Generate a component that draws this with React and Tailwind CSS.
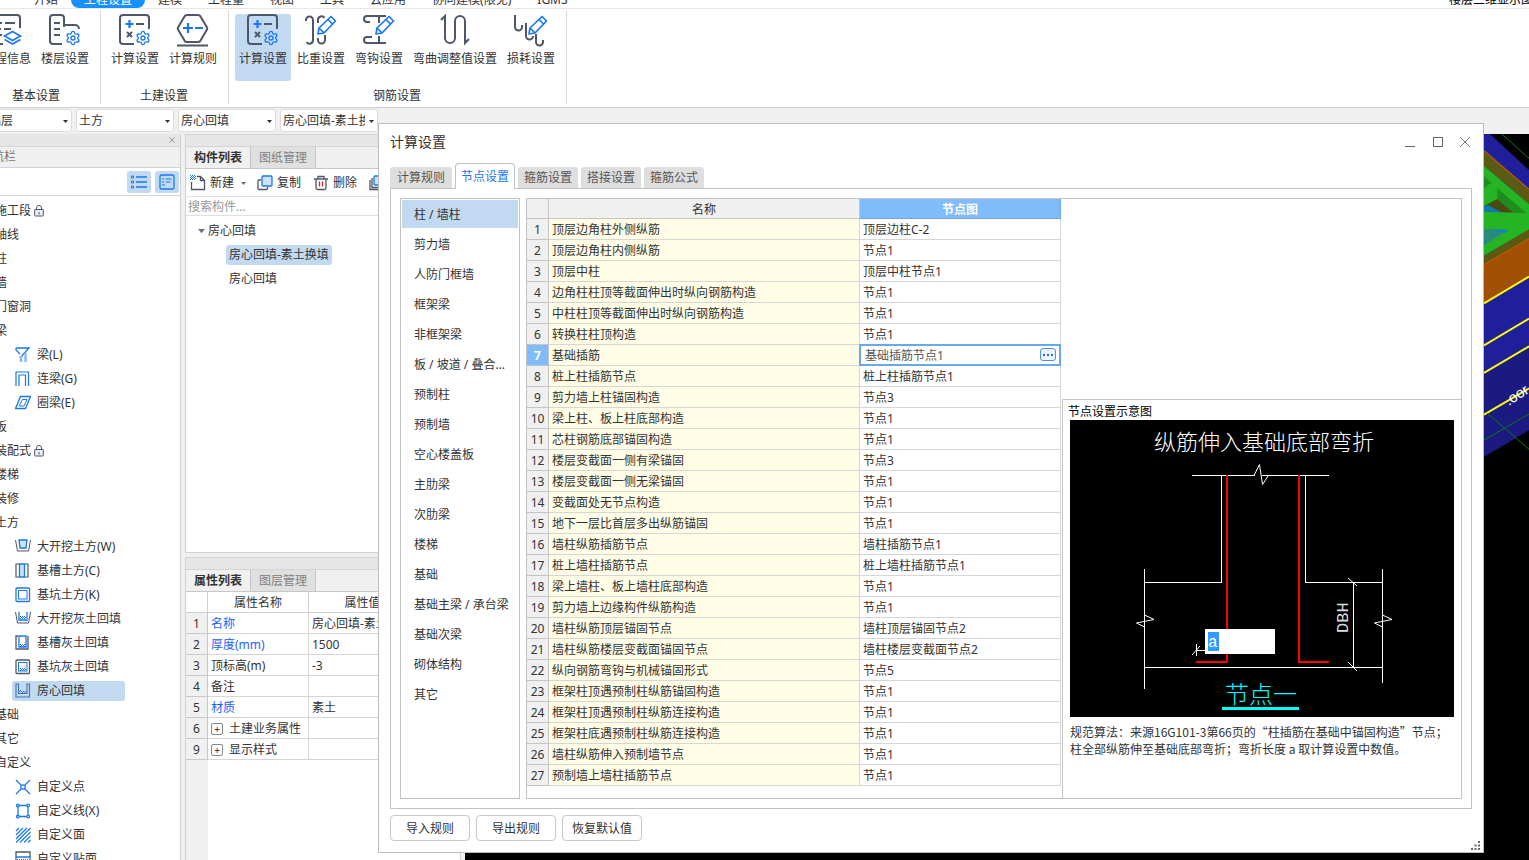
import { useState } from 'react';
import { Settings, X } from 'lucide-react';

const DARK = '#4d5769';
const BLUE = '#1a78ec';

const MENU = ['开始', '工程设置', '建模', '工程量', '视图', '工具', '云应用', '协同建模(限免)', 'IGMS'];

const RIBBON = [
  {
    title: '基本设置',
    items: [
      { label: '工程信息', icon: 'info' },
      { label: '楼层设置', icon: 'floor' },
    ],
  },
  {
    title: '土建设置',
    items: [
      { label: '计算设置', icon: 'calc' },
      { label: '计算规则', icon: 'rule' },
    ],
  },
  {
    title: '钢筋设置',
    items: [
      { label: '计算设置', icon: 'calc', active: true },
      { label: '比重设置', icon: 'weight' },
      { label: '弯钩设置', icon: 'hook' },
      { label: '弯曲调整值设置', icon: 'bend', wide: true },
      { label: '损耗设置', icon: 'loss' },
    ],
  },
];

const FILTERS = [
  { label: '楼层', value: '基础层' },
  { label: '构件大类', value: '土方' },
  { label: '构件类型', value: '房心回填' },
  { label: '构件', value: '房心回填-素土换填' },
];

const NAV = [
  { label: '施工段', lock: true },
  { label: '轴线' },
  { label: '柱' },
  { label: '墙' },
  { label: '门窗洞' },
  { label: '梁' },
  { label: '梁(L)', icon: 'beam' },
  { label: '连梁(G)', icon: 'link' },
  { label: '圈梁(E)', icon: 'ring' },
  { label: '板' },
  { label: '装配式', lock: true },
  { label: '楼梯' },
  { label: '装修' },
  { label: '土方' },
  { label: '大开挖土方(W)', icon: 'dig' },
  { label: '基槽土方(C)', icon: 'trench' },
  { label: '基坑土方(K)', icon: 'pit' },
  { label: '大开挖灰土回填', icon: 'digFill' },
  { label: '基槽灰土回填', icon: 'trenchFill' },
  { label: '基坑灰土回填', icon: 'pitFill' },
  { label: '房心回填', icon: 'room', active: true },
  { label: '基础' },
  { label: '其它' },
  { label: '自定义' },
  { label: '自定义点', icon: 'point' },
  { label: '自定义线(X)', icon: 'line' },
  { label: '自定义面', icon: 'face' },
  { label: '自定义贴面', icon: 'veneer' },
];

const PROPS = [
  { no: 1, name: '名称', value: '房心回填-素土换填', blue: true },
  { no: 2, name: '厚度(mm)', value: '1500', blue: true },
  { no: 3, name: '顶标高(m)', value: '-3' },
  { no: 4, name: '备注', value: '' },
  { no: 5, name: '材质', value: '素土', blue: true },
  { no: 6, name: '土建业务属性', value: '', group: true },
  { no: 9, name: '显示样式', value: '', group: true },
];

const DIALOG_TABS = ['计算规则', '节点设置', '箍筋设置', '搭接设置', '箍筋公式'];

const CATEGORIES = [
  '柱 / 墙柱', '剪力墙', '人防门框墙', '框架梁', '非框架梁', '板 / 坡道 / 叠合板(整厚)', '预制柱', '预制墙',
  '空心楼盖板', '主肋梁', '次肋梁', '楼梯', '基础', '基础主梁 / 承台梁', '基础次梁', '砌体结构', '其它',
];

const NODES = [
  ['顶层边角柱外侧纵筋', '顶层边柱C-2'],
  ['顶层边角柱内侧纵筋', '节点1'],
  ['顶层中柱', '顶层中柱节点1'],
  ['边角柱柱顶等截面伸出时纵向钢筋构造', '节点1'],
  ['中柱柱顶等截面伸出时纵向钢筋构造', '节点1'],
  ['转换柱柱顶构造', '节点1'],
  ['基础插筋', '基础插筋节点1'],
  ['桩上柱插筋节点', '桩上柱插筋节点1'],
  ['剪力墙上柱锚固构造', '节点3'],
  ['梁上柱、板上柱底部构造', '节点1'],
  ['芯柱钢筋底部锚固构造', '节点1'],
  ['楼层变截面一侧有梁锚固', '节点3'],
  ['楼层变截面一侧无梁锚固', '节点1'],
  ['变截面处无节点构造', '节点1'],
  ['地下一层比首层多出纵筋锚固', '节点1'],
  ['墙柱纵筋插筋节点', '墙柱插筋节点1'],
  ['桩上墙柱插筋节点', '桩上墙柱插筋节点1'],
  ['梁上墙柱、板上墙柱底部构造', '节点1'],
  ['剪力墙上边缘构件纵筋构造', '节点1'],
  ['墙柱纵筋顶层锚固节点', '墙柱顶层锚固节点2'],
  ['墙柱纵筋楼层变截面锚固节点', '墙柱楼层变截面节点2'],
  ['纵向钢筋弯钩与机械锚固形式', '节点5'],
  ['框架柱顶遇预制柱纵筋锚固构造', '节点1'],
  ['框架柱顶遇预制柱纵筋连接构造', '节点1'],
  ['框架柱底遇预制柱纵筋连接构造', '节点1'],
  ['墙柱纵筋伸入预制墙节点', '节点1'],
  ['预制墙上墙柱插筋节点', '节点1'],
];

function Gear() {
  return <Settings x="17" y="16" width="16" height="16" color={BLUE} strokeWidth={2} />;
}

function Pencil({ x = 0 }) {
  return (
    <g transform={`translate(${x} 0)`} stroke={BLUE} strokeWidth="1.7" strokeLinejoin="round">
      <path d="M14 20l1-6L27 2.500l4.500 4.500L20 19z" />
      <path d="M24 5.500l4.500 4.500M15 14l5 5" />
    </g>
  );
}

const RIBBON_ICONS = {
  info: (
    <>
      <path d="M13 30H6a3 3 0 0 1-3-3V4a3 3 0 0 1 3-3h21a3 3 0 0 1 3 3v10M8 9h4M15 9h10M8 15h3M14 15h7M8 21h4" />
      <g stroke={BLUE} strokeWidth="1.600">
        <path d="M22.500 17.500l8 4.500-8 4.500-8-4.500zM14.500 25.500l8 4.500 8-4.500" />
      </g>
    </>
  ),
  floor: (
    <>
      <path d="M14 30H5a3 3 0 0 1-3-3V4a3 3 0 0 1 3-3h8a3 3 0 0 1 3 3v9M16 11h11a4 4 0 0 1 4 4M6 9h6M6 15h6M6 21h6" />
      <Gear />
    </>
  ),
  calc: (
    <>
      <path d="M16 30H5a3 3 0 0 1-3-3V4a3 3 0 0 1 3-3h23a3 3 0 0 1 3 3v11M18 10h8M9 18l5 5M14 18l-5 5" />
      <path d="M7.500 10h8M11.500 6v8" stroke={BLUE} strokeWidth="2.200" />
      <Gear />
    </>
  ),
  rule: (
    <>
      <path d="M11 1h11a3 3 0 0 1 2.500 1.400L31 13.500a2 2 0 0 1 0 2L24.500 26.600A3 3 0 0 1 22 28H11a3 3 0 0 1-2.500-1.400L2 15.500a2 2 0 0 1 0-2L8.500 2.400A3 3 0 0 1 11 1zM1 31.500h31" />
      <path d="M7 14h10M12 9v10M19 14h8" stroke={BLUE} strokeWidth="2.200" />
    </>
  ),
  weight: (
    <>
      <path d="M2 7V6a3.500 3.500 0 0 1 7 0v20a3.500 3.500 0 0 1-6.500 2M14 9V6a3.500 3.500 0 0 1 6.500-2M14 24v2a3.500 3.500 0 0 0 7 0v-5" />
      <Pencil />
    </>
  ),
  hook: (
    <>
      <path d="M8 8H5a3 3 0 0 1 0-6h19M17 2v7M5 29h19M5 29a3 3 0 0 1 0-6h5M17 22v7" />
      <Pencil />
    </>
  ),
  bend: (
    <path d="M3 6l4-4v22a5 5 0 0 0 10 0V7a5 5 0 0 1 10 0v22l4-4" />
  ),
  loss: (
    <>
      <path d="M1 1v12a3 3 0 0 0 7 0v-2M12 9v13a3 3 0 0 0 7 0M22 20v8a3 3 0 0 0 7 0v-2" />
      <Pencil x={1} />
    </>
  ),
};

const HATCH = 'M5 9.500h1M7 9.500h1M9 9.500h1M6 10.500h1M8 10.500h1M5 11.500h1M7 11.500h1M9 11.500h1M10 10.500h1';

const TREE_ICONS = {
  beam: (
    <>
      <path d="M1 1h13L5 11M1 1v2l4 4" />
      <path d="M6 9v6M10.500 6v9" stroke="#8ab9f5" strokeWidth="2.500" />
    </>
  ),
  link: <path d="M1 15V1h12.500v14M4 15V4h6.500v11" strokeWidth="1.200" />,
  ring: (
    <>
      <path d="M5.500 1.500H15.500l-5 12H.500z" />
      <path d="M7.500 4.500h4.500l-3 6.500H4z" strokeWidth="1" />
    </>
  ),
  dig: (
    <>
      <path d="M4 1h8l-1 8H5z" fill="#cfe2fb" />
      <path d="M.500 1l2 11h11l2-11" stroke={DARK} strokeWidth="1" />
    </>
  ),
  trench: (
    <>
      <path d="M4.500 1h5v13h-5z" fill="#cfe2fb" />
      <path d="M4 1H1v13h3M10 1h3v13h-3" stroke={DARK} strokeWidth="1.200" />
    </>
  ),
  pit: (
    <>
      <rect x="1" y="1" width="13.500" height="13.500" rx="1" />
      <rect x="3.500" y="3.500" width="8.500" height="8.500" strokeWidth="1" />
    </>
  ),
  digFill: (
    <>
      <path d="M4 1v8h8V1" />
      <path d="M.500 1l2 11h11l2-11" stroke={DARK} strokeWidth="1" />
      <path d="M5 5.500h1M7 5.500h1M9 5.500h1M6 6.500h1M8 6.500h1M10 6.500h1M5 7.500h1M7 7.500h1M9 7.500h1" strokeWidth="1" />
    </>
  ),
  trenchFill: (
    <>
      <path d="M4 1h7v11H4z" />
      <path d="M3 1H1v13h12V1" stroke={DARK} />
      <path d={HATCH} strokeWidth="1" />
    </>
  ),
  pitFill: (
    <>
      <rect x="1" y="1" width="13.500" height="13.500" rx="1" stroke={DARK} />
      <rect x="3.500" y="3.500" width="8.500" height="8.500" strokeWidth="1" />
      <path d={HATCH} strokeWidth="1" />
    </>
  ),
  room: (
    <>
      <path d="M3.500 1H1v13h13.500V1H12v9.500H3.500z" stroke="#4373ae" strokeWidth="1.100" />
      <path d="M4 8.500h1M6 8.500h1M8 8.500h1M10 8.500h1M5 7.500h1M7 9.500h1M9 9.500h1" strokeWidth="1" />
    </>
  ),
  point: (
    <>
      <path d="M1 1l5 5M15 1l-5 5M1 15l5-5M15 15l-5-5" />
      <circle cx="8" cy="8" r="2.200" />
    </>
  ),
  line: (
    <>
      <path d="M3 4v8M13 4v8M4 2.500h8M4 13.500h8" />
      <circle cx="2.800" cy="2.500" r="1.300" />
      <circle cx="13.200" cy="2.500" r="1.300" />
      <circle cx="2.800" cy="13.500" r="1.300" />
      <circle cx="13.200" cy="13.500" r="1.300" />
    </>
  ),
  face: <path d="M1 4l3-3M1 8l7-7M1 12l11-11M1 15.500L15.500 1M5 15.500L15.500 5M9 15.500l6.500-6.500M13 15.500l2.500-2.500" strokeWidth="1.200" />,
  veneer: (
    <>
      <path d="M1 6V1h14v5" stroke={DARK} />
      <path d="M1 6h14v8H1z" />
      <path d="M2 8.500h1M4 8.500h1M6 8.500h1M8 8.500h1M10 8.500h1M12 8.500h1M3 9.500h1M5 9.500h1M7 9.500h1M9 9.500h1M11 9.500h1" strokeWidth="1" />
    </>
  ),
};

function Caret({ className = 'w-[5px]' }) {
  return (
    <svg viewBox="0 0 5 3" className={`shrink-0 ${className}`}>
      <path d="M0 0h5L2.500 3z" fill="currentColor" />
    </svg>
  );
}

function Lock() {
  return (
    <svg viewBox="0 0 10 12" className="ml-[3px] h-3 w-[10px]" fill="none" stroke={DARK}>
      <rect x=".7" y="4.500" width="8.600" height="6.500" rx=".5" fill="#eaf1fb" />
      <path d="M2.500 4.500V3a2.500 2.500 0 0 1 5 0v1.500M5 7v2.500" />
    </svg>
  );
}

function MenuBar() {
  return (
    <nav className="flex h-[9px] shrink-0 items-end overflow-hidden border-b border-[#e8e8e8] bg-white pl-[21px]">
      {MENU.map((item) => (
        <a
          key={item}
          href="#"
          className={`h-[18px] shrink-0 px-[13px] leading-5 ${
            item === '工程设置' ? 'rounded-lg bg-[#1890ff] text-white' : ''
          }`}
        >
          {item}
        </a>
      ))}
      <a href="#" className="ml-auto h-[18px] w-20 shrink-0 leading-5 whitespace-nowrap text-black">
        楼层三维显示图
      </a>
    </nav>
  );
}

function Ribbon() {
  return (
    <div className="flex h-[99px] shrink-0 border-b border-[#d0d0d0] bg-white pt-[2px] pb-[3px]">
      {RIBBON.map((group, i) => (
        <section
          key={group.title}
          className={`flex shrink-0 flex-col items-center justify-between border-r border-[#d9d9d9] pt-[3px] pr-[7px] pl-[6px] ${
            i === 0 ? '-ml-[27px]' : ''
          }`}
        >
          <div className="flex gap-[2px]">
            {group.items.map((item) => (
              <button
                key={item.label}
                type="button"
                className={`flex h-[67px] flex-col items-center rounded-[3px] whitespace-nowrap ${
                  item.wide ? 'w-[92px]' : 'w-14'
                } ${item.active ? 'bg-[#c2d9f2]' : ''}`}
              >
                <svg viewBox="0 0 34 34" className="h-[34px] w-[34px]" fill="none" stroke={DARK} strokeWidth="2">
                  {RIBBON_ICONS[item.icon]}
                </svg>
                <span className="mt-[3px] leading-4">{item.label}</span>
              </button>
            ))}
          </div>
          <h2 className="leading-4">{group.title}</h2>
        </section>
      ))}
    </div>
  );
}

function FilterBar() {
  return (
    <div className="flex h-[26px] shrink-0 gap-1 bg-[#f0f0f0] pt-[1px]">
      {FILTERS.map((f, i) => (
        <label
          key={f.label}
          className={`flex h-[23px] w-[98px] shrink-0 items-center gap-1 rounded-[3px] border border-[#dcdcdc] bg-white pt-px ${
            i === 0 ? '-ml-[26px]' : ''
          }`}
        >
          <select
            aria-label={f.label}
            className="w-[84px] shrink-0 appearance-none overflow-hidden bg-transparent pl-[2px] leading-5 text-clip outline-none"
          >
            <option>{f.value}</option>
          </select>
          <Caret />
        </label>
      ))}
    </div>
  );
}

function NavPanel() {
  return (
    <aside className="flex w-[181px] shrink-0 flex-col overflow-hidden border-r border-[#d0d0d0] bg-white">
      <div className="flex h-[13px] shrink-0 items-center justify-end border-b border-[#d4d4d4] bg-[#e6e6e6] pr-[3px]">
        <button type="button" aria-label="关闭">
          <X size={10} color="#8a8a8a" />
        </button>
      </div>
      <h2 className="h-[21px] shrink-0 border-b border-[#d4d4d4] bg-[#f0f0f0] leading-5 text-[#777]">
        <span className="-ml-[20px]">导航栏</span>
      </h2>
      <div className="flex h-7 shrink-0 items-center justify-end gap-1 border-b border-[#d4d4d4] pr-[1px]">
        <button type="button" aria-label="列表" className="rounded-[3px] bg-[#c2d9f2] p-1 py-[3px]">
          <svg viewBox="0 0 16 16" className="size-4" fill="none" stroke={BLUE}>
            <path d="M5 3h11M5 8h11M5 13h11" strokeWidth="1.300" />
            <path d="M.500 2h2v2h-2zM.500 7h2v2h-2zM.500 12h2v2h-2z" />
          </svg>
        </button>
        <button type="button" aria-label="详情" className="rounded-[3px] bg-[#c2d9f2] p-1 py-[3px]">
          <svg viewBox="0 0 16 16" className="size-4" fill="none" stroke={BLUE} strokeWidth="1.300">
            <rect x="1" y="1" width="14" height="14" rx="1.500" />
            <path d="M3 5h2M6.500 5H12.500M3 8h2M6.500 8h5M3 11h3" strokeWidth="1" />
          </svg>
        </button>
      </div>
      <ul className="pt-[3px]">
        {NAV.map((item) =>
          item.icon ? (
            <li key={item.label} className="flex h-6 items-center">
              <a
                href="#"
                className={`ml-3 flex h-5 w-[113px] items-center gap-[6px] rounded-[3px] pl-[3px] whitespace-nowrap ${
                  item.active ? 'bg-[#c2d9f2]' : ''
                }`}
              >
                <svg viewBox="0 0 16 16" className="size-4 shrink-0" fill="none" stroke={BLUE} strokeWidth="1.300">
                  {TREE_ICONS[item.icon]}
                </svg>
                {item.label}
              </a>
            </li>
          ) : (
            <li key={item.label} className="-ml-[5px] flex h-6 items-center">
              <a href="#">{item.label}</a>
              {item.lock && <Lock />}
            </li>
          )
        )}
      </ul>
    </aside>
  );
}

function PanelTabs({ tabs }) {
  return (
    <>
      <div className="h-[13px] shrink-0 border-y border-[#d4d4d4] bg-[#e6e6e6]" />
      <div className="flex h-[22px] shrink-0 border-b border-[#c4c7cc] bg-[#f0f0f0]">
        <button type="button" className="w-[65px] border-r border-[#c4c7cc] font-bold">
          {tabs[0]}
        </button>
        <button type="button" className="w-[65px] border-r border-[#c4c7cc] bg-[#e0e0e0] text-[#808080]">
          {tabs[1]}
        </button>
      </div>
    </>
  );
}

function ComponentPanel() {
  return (
    <section className="flex h-[419px] shrink-0 flex-col border border-t-0 border-[#d0d0d0] bg-white">
      <PanelTabs tabs={['构件列表', '图纸管理']} />
      <div className="flex h-7 shrink-0 items-center overflow-hidden border-b border-[#e0e0e0] pt-px pl-1 whitespace-nowrap">
        <button type="button" className="flex items-center gap-1">
          <svg viewBox="0 0 16 16" className="size-4" fill="none" stroke={DARK} strokeWidth="1.300">
            <path d="M1.500 7v7.500h13V5.500L10.500 1.500H7M10.500 1.500v4h4" />
            <path d="M0 .500h5M0 2.500h5M0 4.500h5" stroke={BLUE} strokeDasharray="1 1" strokeWidth="1" />
            <path d="M1 1.500h5M1 3.500h5" stroke={BLUE} strokeDasharray="1 1" strokeWidth="1" />
          </svg>
          新建
        </button>
        <Caret className="ml-[7px] w-[5px] text-gray-500" />
        <button type="button" className="ml-[11px] flex items-center gap-1">
          <svg viewBox="0 0 16 16" className="size-4" fill="none" stroke={DARK} strokeWidth="1.300">
            <path d="M4 5H2a1 1 0 0 0-1 1v7.500a1 1 0 0 0 1 1h7.500a1 1 0 0 0 1-1V12" />
            <rect x="5" y="1" width="10" height="10" rx="1" stroke={BLUE} fill="#cfe2fb" />
          </svg>
          复制
        </button>
        <button type="button" className="ml-3 flex items-center gap-1">
          <svg viewBox="0 0 16 16" className="size-4" fill="none" stroke={DARK} strokeWidth="1.300">
            <path d="M1 4h14M5 4V1.500h6V4M3 4v9a1.500 1.500 0 0 0 1.500 1.500h7A1.500 1.500 0 0 0 13 13V4" />
            <path d="M6.500 6.500v5M9.500 6.500v5" stroke="#d22" />
          </svg>
          删除
        </button>
        <button type="button" className="ml-3 flex items-center gap-1">
          <svg viewBox="0 0 16 16" className="size-4" fill="none" stroke={DARK} strokeWidth="1.300">
            <path d="M1 5v9.500h9M3 3v9.500h9" />
            <rect x="5" y="1" width="9" height="9" rx="1" stroke={BLUE} fill="#cfe2fb" />
          </svg>
          层间复制
        </button>
      </div>
      <input
        type="text"
        aria-label="搜索构件"
        placeholder="搜索构件..."
        className="h-[19px] shrink-0 border-b border-[#e0e0e0] px-[2px] outline-none placeholder:text-[#999]"
      />
      <ul className="pt-[3px]">
        <li className="flex h-6 items-center pl-3">
          <Caret className="mr-[3px] w-[7px] text-gray-500" />
          房心回填
        </li>
        <li className="flex h-6 items-center pl-10">
          <a href="#" className="h-5 rounded-[3px] bg-[#c2d9f2] px-[3px] leading-5">
            房心回填-素土换填
          </a>
        </li>
        <li className="flex h-6 items-center pl-[43px]">
          <a href="#">房心回填</a>
        </li>
      </ul>
    </section>
  );
}

function PropertyPanel() {
  return (
    <section className="mt-1 flex min-h-0 flex-1 flex-col border-x border-[#d0d0d0] bg-white">
      <PanelTabs tabs={['属性列表', '图层管理']} />
      <table className="w-full shrink-0 table-fixed border-separate border-spacing-0">
        <thead>
          <tr className="h-[21px]">
            <th className="w-[22px] border-r border-b border-[#d0d0d0]" />
            <th className="w-[101px] border-r border-b border-[#d0d0d0] pt-px font-normal">属性名称</th>
            <th className="border-b border-[#d0d0d0] pt-px pr-11 font-normal">属性值</th>
          </tr>
        </thead>
        <tbody>
          {PROPS.map((p) => (
            <tr key={p.no} className="h-[21px]">
              <td className="border-r border-b border-[#c8c8c8] bg-[#f0f0f0] pt-[2px] text-center">{p.no}</td>
              <td className={`border-r border-b border-[#d6d6d6] pt-[2px] pl-[3px] ${p.blue ? 'text-[#1e5eff]' : ''}`}>
                <div className="flex items-center gap-[6px]">
                  {p.group && (
                    <button
                      type="button"
                      aria-label="展开"
                      className="flex size-3 items-center justify-center rounded-[2px] border border-[#888] bg-white text-[10px]"
                    >
                      +
                    </button>
                  )}
                  {p.name}
                </div>
              </td>
              <td className="overflow-hidden border-b border-[#d6d6d6] pt-[2px] pl-[3px] whitespace-nowrap">{p.value}</td>
            </tr>
          ))}
        </tbody>
      </table>
      <div className="w-[22px] flex-1 bg-[#f0f0f0]" />
    </section>
  );
}

function ModelView() {
  return (
    <main className="ml-1 flex flex-1 justify-end bg-black">
      <svg viewBox="312 102 135 1038" className="h-[346px] w-[45px]">
        <path d="M312 102h18L447 210v780L312 1070z" fill="#1f1f9c" />
        <path d="M312 818l135-79v251l-135 80z" fill="#1a1a80" />
        <path d="M365 102l82 73" stroke="#0a7a0a" strokeWidth="3" />
        <path d="M312 154l135 116v42L312 197z" fill="#5a5a12" />
        <path d="M312 152l135 116" stroke="#c05a00" strokeWidth="4" />
        <path d="M312 197l135 115v78L312 467z" fill="#24b424" />
        <path d="M312 228l22 20-22 16z" fill="#1f8c1f" />
        <path d="M352 265l88 75-40-2-48-41z" fill="#1f8c1f" />
        <path d="M312 318l40-21 48 41-88-4z" fill="#4a4a10" />
        <path d="M312 318l12-2 44 22-56-4z" fill="#0c7cb4" />
        <path d="M312 387l73 3-73 45z" fill="#2a8a80" />
        <path d="M336 389l40 10 9-9-30-1zM312 425l10 2-10 8z" fill="#0f80d0" />
        <path d="M312 467l135-79v28l-135 78z" fill="#5a5a12" />
        <path d="M312 494l135-78v114l-135 80z" fill="#a05000" />
        <path d="M312 494l135-78" stroke="#c05a00" strokeWidth="4" />
        <path d="M312 610l135-80M312 736l135-80M312 819l135-80M312 944l135-79" stroke="#ff0" strokeWidth="6" />
        <path d="M312 1020l135-78M322 940l125 108" stroke="#0a7a0a" strokeWidth="3" />
        <text x="386" y="918" fontSize="44" fill="#fff" fontFamily="Liberation Sans" transform="rotate(-33 386 918)">
          .oor
        </text>
      </svg>
    </main>
  );
}

function NodeDiagram({ value, onChange }) {
  return (
    <div className="relative h-[297px] w-[384px] bg-black">
      <svg
        viewBox="0 0 384 297"
        className="size-full font-light"
        fill="none"
        stroke="#fff"
        shapeRendering="crispEdges"
      >
        <text x="84" y="30" fontSize="22" fill="#fff" stroke="none">纵筋伸入基础底部弯折</text>
        <path d="M122 55.500h63M192 55.500h67M151.500 55.500v107H74.500M235.500 55.500v107H312.500M74.500 149v120M312.500 149v114M74.500 247.500h238M283.500 162v85" />
        <path
          d="M184 55.500l5.500-11 3 20 5.500-8.500M74.500 195l9.500 4.500-17.500 3.500 8 4M312.500 195l9.500 4.500-17.500 3.500 8 4M278 158l9 8M278 242l9 9M126.500 224v12M122 235l8-9M127 230.500h10"
          shapeRendering="auto"
        />
        <path d="M157 55v187h-31M229 55v187h30" stroke="#f00" strokeWidth="2" />
        <text
          x="278"
          y="213"
          fontSize="17"
          fill="#ddd"
          stroke="none"
          fontFamily="Liberation Mono"
          transform="rotate(-90 278 213)"
        >
          DBH
        </text>
        <text x="155" y="283" fontSize="24" fill="#0ff" stroke="none">节点一</text>
        <path d="M152 288.500h77" stroke="#0ff" strokeWidth="3" />
      </svg>
      <input
        type="text"
        aria-label="弯折长度 a"
        value={value}
        onChange={onChange}
        className="absolute top-[209px] left-[135px] h-[25px] w-[70px] bg-white bg-[linear-gradient(#3399ff,#3399ff)] bg-[length:11px_19px] bg-[position:3px_3px] bg-no-repeat pt-[2px] pl-[3px] font-['Liberation_Mono',monospace] text-base text-white outline-none"
      />
    </div>
  );
}

function NodeTable() {
  return (
    <table className="w-[534px] shrink-0 table-fixed border-separate border-spacing-0 self-start">
      <thead>
        <tr className="h-5">
          <th className="w-[22px] border-r border-b border-[#c4c4c4] bg-[#f0f0f0]" />
          <th className="w-[311px] border-r border-b border-[#c4c4c4] bg-[#f0f0f0] pt-[2px] font-normal">名称</th>
          <th className="border-r border-b border-[#68a8ec] bg-[#80bcfc] pt-[2px] text-white">节点图</th>
        </tr>
      </thead>
      <tbody>
        {NODES.map(([name, node], i) => {
          const active = name === '基础插筋';
          return (
            <tr key={name} className="h-[21px]">
              <td
                className={`border-r border-b border-[#c4c4c4] pt-[2px] text-center ${
                  active ? 'bg-[#80bcfc] font-bold text-white' : 'bg-[#f0f0f0]'
                }`}
              >
                {i + 1}
              </td>
              <td className="border-r border-b border-[#d6d6d6] bg-[#fffde6] pt-[2px] pl-[3px]">{name}</td>
              <td className="border-r border-b border-[#d6d6d6]">
                {active ? (
                  <div className="flex h-5 items-center justify-between pr-1 pl-[5px] outline-2 -outline-offset-1 outline-[#68a8ec]">
                    <input
                      type="text"
                      aria-label={name}
                      defaultValue={node}
                      className="w-40 pt-[2px] text-[#555] outline-none"
                    />
                    <button
                      type="button"
                      aria-label="选择节点"
                      className="mb-px flex h-[13px] w-4 items-center justify-center rounded-[3px] border border-[#4a94e8] bg-[#eef5fe]"
                    >
                      <svg viewBox="0 0 10 2" className="h-[2px] w-[10px]" fill="#1a6fe0">
                        <path d="M0 0h2v2H0zM4 0h2v2H4zM8 0h2v2H8z" />
                      </svg>
                    </button>
                  </div>
                ) : (
                  <div className="pt-[2px] pl-[3px]">{node}</div>
                )}
              </td>
            </tr>
          );
        })}
      </tbody>
    </table>
  );
}

function SettingsDialog() {
  const [tab, setTab] = useState('节点设置');
  const [category, setCategory] = useState(CATEGORIES[0]);
  const [bend, setBend] = useState('a');

  return (
    <div
      role="dialog"
      aria-label="计算设置"
      className="absolute top-[123px] right-[45px] bottom-[7px] left-[378px] flex flex-col border border-[#bcbcbc] bg-white px-[11px]"
    >
      <header className="mb-[3px] flex h-9 shrink-0 items-center justify-between pr-px">
        <h1 className="text-sm">计算设置</h1>
        <div className="flex items-center gap-4 text-[#777]">
          <button type="button" aria-label="最小化" className="flex size-3 items-end pb-[1px]">
            <span className="h-px w-[10px] bg-[#666]" />
          </button>
          <button type="button" aria-label="最大化" className="size-[10px] border border-[#666]" />
          <button type="button" aria-label="关闭">
            <svg viewBox="0 0 12 12" className="size-3" stroke="#777">
              <path d="M1 1l10 10M11 1L1 11" />
            </svg>
          </button>
        </div>
      </header>

      <div className="relative z-10 -mb-px flex h-[26px] shrink-0 items-end gap-[3px]">
        {DIALOG_TABS.map((t) => (
          <button
            key={t}
            type="button"
            onClick={() => setTab(t)}
            className={
              t === tab
                ? 'h-[26px] w-[60px] rounded-t-[4px] border border-b-0 border-[#bfc2c8] bg-white text-[#1a78ec]'
                : 'mb-px h-[21px] w-[60px] rounded-t-[3px] bg-[#dedede] text-[#555] first:w-[62px]'
            }
          >
            {t}
          </button>
        ))}
      </div>

      <div className="flex min-h-0 flex-1 gap-[6px] border border-[#bfc2c8] p-[9px]">
        <ul className="w-[120px] shrink-0 border border-[#c4c4c4] p-px">
          {CATEGORIES.map((c) => (
            <li key={c} className="mb-[2px]">
              <button
                type="button"
                onClick={() => setCategory(c)}
                className={`block h-7 w-full truncate pt-[2px] pr-[6px] pl-3 text-left ${
                  c === category ? 'bg-[#c2d9f2]' : ''
                }`}
              >
                {c}
              </button>
            </li>
          ))}
        </ul>
        <div className="flex min-w-0 flex-1 border border-[#c4c4c4]">
          <NodeTable />
          <div className="flex min-w-0 flex-1 flex-col justify-end pl-px">
            <section className="flex h-[399px] flex-col border-t border-l border-[#c4c4c4] pl-[7px]">
              <h2 className="-ml-[2px] pt-[3px] leading-[17px] text-black">节点设置示意图</h2>
              <NodeDiagram value={bend} onChange={(e) => setBend(e.target.value)} />
              <p className="mt-[6px] font-['Noto_Sans_CJK_SC',sans-serif] leading-[17px] whitespace-nowrap">
                规范算法：来源16G101-3第66页的“柱插筋在基础中锚固构造”节点；
                <br />
                柱全部纵筋伸至基础底部弯折；弯折长度 a 取计算设置中数值。
              </p>
            </section>
          </div>
        </div>
      </div>

      <footer className="relative flex h-[43px] shrink-0 gap-[6px] pt-[6px]">
        {['导入规则', '导出规则', '恢复默认值'].map((b) => (
          <button key={b} type="button" className="h-[26px] w-20 rounded-[4px] border border-[#c8c8c8] bg-white pt-px">
            {b}
          </button>
        ))}
        <svg viewBox="0 0 10 10" className="absolute -right-[9px] bottom-[1px] size-[10px]" fill="#666">
          <path d="M7 0h2v2H7zM7 3.500h2v2H7zM7 7h2v2H7zM3.500 3.500h2v2h-2zM3.500 7h2v2h-2zM0 7h2v2H0z" />
        </svg>
      </footer>
    </div>
  );
}

export default function App() {
  return (
    <div className="relative flex h-screen flex-col overflow-hidden bg-[#f0f0f0] font-['Noto_Sans','Noto_Sans_CJK_SC',sans-serif] text-[12px] leading-4 text-[#333]">
      <MenuBar />
      <Ribbon />
      <FilterBar />
      <div className="flex min-h-0 flex-1">
        <NavPanel />
        <div className="ml-1 flex w-[276px] shrink-0 flex-col">
          <ComponentPanel />
          <PropertyPanel />
        </div>
        <ModelView />
      </div>
      <SettingsDialog />
    </div>
  );
}
